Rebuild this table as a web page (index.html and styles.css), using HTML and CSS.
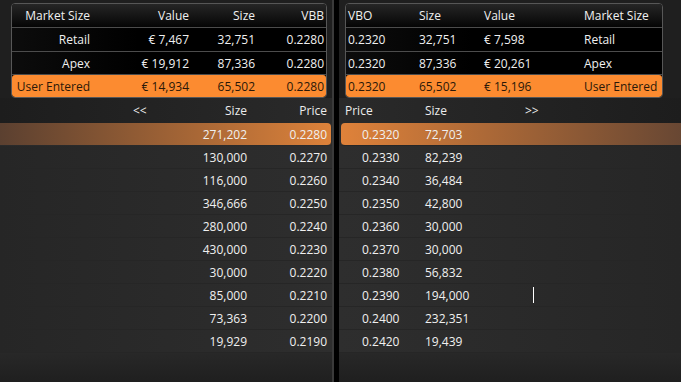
FILE: index.html
```html
<!DOCTYPE html>
<html>
<head>
<meta charset="utf-8">
<link rel="stylesheet" href="styles.css">
</head>
<body>
<div class="app">
  <section class="side left">
    <div class="top">
      <div class="box box-left">
        <div class="brow bhead"><span>Market Size</span><span>Value</span><span>Size</span><span>VBB</span></div>
        <div class="brow"><span>Retail</span><span>€ 7,467</span><span>32,751</span><span>0.2280</span></div>
        <div class="brow apex"><span>Apex</span><span>€ 19,912</span><span>87,336</span><span>0.2280</span></div>
        <div class="brow buser"><span>User Entered</span><span>€ 14,934</span><span>65,502</span><span>0.2280</span></div>
      </div>
    </div>
    <div class="dhead"><span></span><span class="arrow">&lt;&lt;</span><span>Size</span><span>Price</span></div>
    <div class="drows">
      <div class="drow hl"><span></span><span></span><span>271,202</span><span>0.2280</span></div>
      <div class="drow"><span></span><span></span><span>130,000</span><span>0.2270</span></div>
      <div class="drow"><span></span><span></span><span>116,000</span><span>0.2260</span></div>
      <div class="drow"><span></span><span></span><span>346,666</span><span>0.2250</span></div>
      <div class="drow"><span></span><span></span><span>280,000</span><span>0.2240</span></div>
      <div class="drow"><span></span><span></span><span>430,000</span><span>0.2230</span></div>
      <div class="drow"><span></span><span></span><span>30,000</span><span>0.2220</span></div>
      <div class="drow"><span></span><span></span><span>85,000</span><span>0.2210</span></div>
      <div class="drow"><span></span><span></span><span>73,363</span><span>0.2200</span></div>
      <div class="drow"><span></span><span></span><span>19,929</span><span>0.2190</span></div>
    </div>
    <div class="filler"></div>
  </section>
  <div class="divider"></div>
  <section class="side right">
    <div class="top">
      <div class="box box-right">
        <div class="brow bhead"><span>VBO</span><span>Size</span><span>Value</span><span>Market Size</span></div>
        <div class="brow"><span>0.2320</span><span>32,751</span><span>€ 7,598</span><span>Retail</span></div>
        <div class="brow apex"><span>0.2320</span><span>87,336</span><span>€ 20,261</span><span>Apex</span></div>
        <div class="brow buser"><span>0.2320</span><span>65,502</span><span>€ 15,196</span><span>User Entered</span></div>
      </div>
    </div>
    <div class="dhead"><span>Price</span><span>Size</span><span class="arrow">&gt;&gt;</span></div>
    <div class="drows">
      <div class="drow hl"><span>0.2320</span><span>72,703</span><span></span></div>
      <div class="drow"><span>0.2330</span><span>82,239</span><span></span></div>
      <div class="drow"><span>0.2340</span><span>36,484</span><span></span></div>
      <div class="drow"><span>0.2350</span><span>42,800</span><span></span></div>
      <div class="drow"><span>0.2360</span><span>30,000</span><span></span></div>
      <div class="drow"><span>0.2370</span><span>30,000</span><span></span></div>
      <div class="drow"><span>0.2380</span><span>56,832</span><span></span></div>
      <div class="drow"><span>0.2390</span><span>194,000</span><span></span></div>
      <div class="drow"><span>0.2400</span><span>232,351</span><span></span></div>
      <div class="drow"><span>0.2420</span><span>19,439</span><span></span></div>
    </div>
    <div class="filler"></div>
  </section>
  <span class="caret"></span>
</div>
</body>
</html>
```
FILE: styles.css
```css
* { box-sizing: border-box; }
html, body { margin: 0; padding: 0; }
body {
  background: #1f1f1f;
  font-family: "Open Sans", "Noto Sans", sans-serif;
  font-size: 12px;
  color: #f0f0f0;
}
.app {
  position: relative;
  display: flex;
  width: 681px;
  height: 382px;
  overflow: hidden;
}
.side {
  display: flex;
  flex-direction: column;
}
.side.left { width: 332px; }
.side.right { flex: 1; }
.divider {
  width: 7px;
  background: linear-gradient(to right, #3a3a3a 0, #3a3a3a 2px, #000 2px);
}
.top {
  height: 98px;
  padding-top: 3px;
  background: #1f1f1f;
}
.box {
  border: 1px solid #575757;
  border-radius: 4px;
  background: #000;
  overflow: hidden;
  height: 95px;
}
.box-left { margin-left: 11px; width: 316px; }
.box-right { margin-left: 6px; width: 318px; }
.brow {
  display: grid;
  height: 24px;
  align-items: center;
  border-bottom: 1px solid #4c4c4c;
  white-space: nowrap;
  background: linear-gradient(to right, #0c0c0c, #000 40%);
}
.brow.bhead { background: linear-gradient(#262626, #050505); }
.brow.apex { height: 23px; }
.brow.buser {
  height: 22px;
  border-bottom: none;
  background: #fc8b30;
  border-radius: 3px;
  color: #2a1808;
}
.box-left .brow {
  grid-template-columns: 78px 99px 66px 69px;
  text-align: right;
}
.box-right .brow {
  grid-template-columns: 71px 65px 100px 1fr;
  padding-left: 2px;
  text-align: left;
}
.dhead {
  display: grid;
  height: 25px;
  align-items: center;
  color: #ececec;
}
.left .dhead {
  grid-template-columns: 133px 34px 80px 80px;
  background: linear-gradient(to right, #1d1d1d, #2a2a2a);
}
.right .dhead {
  grid-template-columns: 86px 100px 1fr;
  background: linear-gradient(to right, #2a2a2a, #1d1d1d);
}
.left .dhead span, .left .drow span { text-align: right; }
.left .dhead .arrow { text-align: left; }
.right .dhead span:first-child { padding-left: 6px; }
.drows { background: #2c2c2c; }
.drow {
  display: grid;
  height: 23px;
  align-items: center;
  border-bottom: 1px solid #262626;
  white-space: nowrap;
}
.left .drow {
  grid-template-columns: 133px 34px 80px 80px;
  background: linear-gradient(to right, #262626, #2e2e2e);
}
.right .drow {
  grid-template-columns: 86px 100px 1fr;
  background: linear-gradient(to right, #2e2e2e, #262626);
}
.right .drow span:first-child { padding-left: 23px; }
.left .drow.hl {
  background: linear-gradient(to right, #5b4030, #dd823a);
  border-radius: 0 4px 4px 0;
  margin-right: 1px;
  border-bottom-color: #2a2a2a;
}
.right .drow.hl {
  grid-template-columns: 84px 100px 1fr;
  background: linear-gradient(to right, #df823a, #684733);
  border-radius: 4px 0 0 4px;
  margin-left: 2px;
}
.right .drow.hl span:first-child { padding-left: 21px; }
.filler {
  flex: 1;
  background: linear-gradient(#282828, #1f1f1f);
}
.caret {
  position: absolute;
  left: 533px;
  top: 287px;
  width: 1px;
  height: 16px;
  background: #fff;
}
```
